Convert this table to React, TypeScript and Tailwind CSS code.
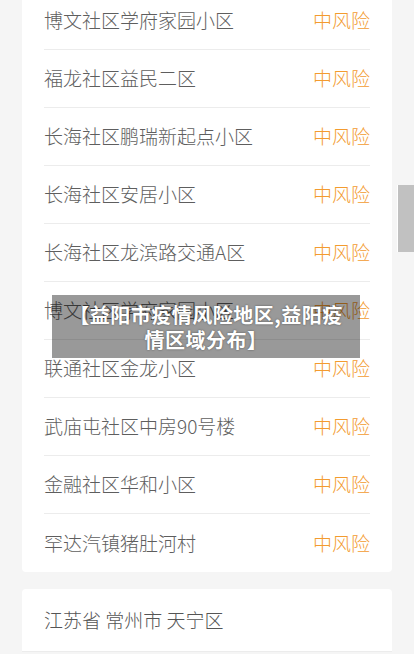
import React from "react";

const rows = [
  "博文社区学府家园小区",
  "福龙社区益民二区",
  "长海社区鹏瑞新起点小区",
  "长海社区安居小区",
  "长海社区龙滨路交通A区",
  "博文社区学府家园小区",
  "联通社区金龙小区",
  "武庙屯社区中房90号楼",
  "金融社区华和小区",
  "罕达汽镇猪肚河村",
];

export default function App() {
  return (
    <div
      className="relative h-[654px] w-[414px] overflow-hidden bg-[#f5f5f5]"
      style={{ fontFamily: '"Noto Sans CJK SC", "Noto Sans", sans-serif' }}
    >
      <div className="mt-[-8px] px-[22px]">
        <div className="rounded-[4px] bg-white px-[22px]">
          {rows.map((r, i) => (
            <div
              key={i}
              className={`flex h-[58px] items-center justify-between text-[19px] font-light ${
                i < rows.length - 1 ? "border-b border-[#ececec]" : ""
              }`}
            >
              <span className="text-[#5e5e5e]">{r}</span>
              <span className="text-[#f39b2f]">中风险</span>
            </div>
          ))}
        </div>
        <div className="mt-[17px] rounded-t-[4px] bg-white">
          <div className="flex h-[63px] items-center border-b border-[#ececec] px-[22px] text-[19px] font-light text-[#555555]">
            江苏省 常州市 天宁区
          </div>
        </div>
      </div>

      <div className="absolute left-[52px] top-[295px] flex h-[63px] w-[308px] items-center justify-center bg-black/40 px-[14px] text-center text-[20px] font-bold leading-[25px] tracking-[0.5px] text-white [text-shadow:0_0_2px_rgba(0,0,0,0.5)]">
        【益阳市疫情风险地区,益阳疫情区域分布】
      </div>

      <div className="absolute right-0 top-[185px] h-[67px] w-[17px] border-l border-white bg-[#c1c1c1]" />
    </div>
  );
}
